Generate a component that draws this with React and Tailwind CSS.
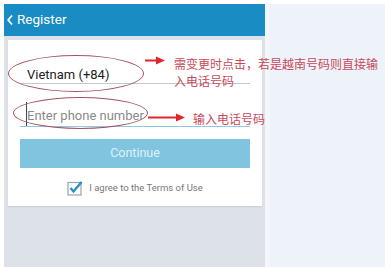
import React from 'react';

const Arrow = ({ width }) => (
    <svg width={width} height="9" viewBox={`0 0 ${width} 9`}>
        <line x1="0" y1="4.5" x2={width - 7} y2="4.5" stroke="#e0252b" strokeWidth="2" />
        <polygon points={`${width - 9},0.5 ${width},4.5 ${width - 9},8.5`} fill="#e0252b" />
    </svg>
);

export default function App() {
    return (
        <div className="relative w-[385px] h-[267px] overflow-hidden bg-white pt-[4px] pl-[4px] font-['Roboto','Noto_Sans_CJK_SC',sans-serif]">
            <div className="flex h-full">
                <div className="w-[261px] flex flex-col">
                    <div className="h-[32px] bg-[#1a8cc4] flex items-center pl-[2px] gap-[3px] text-white">
                        <svg width="8" height="12" viewBox="0 0 8 12">
                            <path d="M6 1.5 L2.2 6 L6 10.5" stroke="#fff" strokeWidth="1.8" fill="none" />
                        </svg>
                        <span className="text-[13.5px] leading-none">Register</span>
                    </div>
                    <div className="flex-1 bg-[#dde2e9] pt-[4px] pl-[4px] pr-[3px]">
                        <div className="bg-white h-[166px] shadow-[0_1px_1px_rgba(0,0,0,0.08)] px-[12px] flex flex-col">
                            <div className="h-[44px] border-b border-[#c4c7cc] flex items-end pb-[2px] pl-[7px]">
                                <span className="text-[13px] text-[#222] leading-none">Vietnam (+84)</span>
                            </div>
                            <div className="h-[43px] border-b border-[#8fc8e2] flex items-end pl-[6px]">
                                <span className="w-px h-[24px] bg-[#2b4a7a]" />
                                <span className="text-[13px] text-[#8a8a8a] leading-none mb-[4px]">Enter phone number</span>
                            </div>
                            <div className="mt-[12px] h-[29px] bg-[#80c4e0] flex items-center justify-center text-[12.5px] text-[#dff1f8]">
                                Continue
                            </div>
                            <div className="mt-[12px] flex items-center justify-center gap-[6px]">
                                <svg width="16" height="16" viewBox="0 0 16 16">
                                    <rect x="1" y="2.5" width="13" height="12.5" fill="#fff" stroke="#9aa3ab" strokeWidth="1.2" />
                                    <path d="M3.5 8 L6.5 11.5 L14.5 2" stroke="#2a8fc2" strokeWidth="2.4" fill="none" />
                                </svg>
                                <span className="text-[9.5px] text-[#777]">I agree to the Terms of Use</span>
                            </div>
                        </div>
                    </div>
                </div>
                <div className="w-[5px] bg-[#f4f6fb]" />
                <div className="flex-1 bg-[#eef2f9]" />
            </div>

            {/* annotations */}
            <div className="absolute left-[8px] top-[55px] w-[136px] h-[37px] rounded-[50%] border border-[#a4545c]" />
            <div className="absolute left-[13px] top-[97px] w-[135px] h-[32px] rounded-[50%] border border-[#a4545c]" />
            <div className="absolute left-[145px] top-[56px]"><Arrow width={20} /></div>
            <div className="absolute left-[148px] top-[113px]"><Arrow width={37} /></div>
            <div className="absolute left-[174px] top-[57px] text-[12px] leading-[17px] text-[#c84a5a] whitespace-nowrap">
                需变更时点击，若是越南号码则直接输<br />入电话号码
            </div>
            <div className="absolute left-[193px] top-[112px] text-[12px] leading-[17px] text-[#c84a5a] whitespace-nowrap">
                输入电话号码
            </div>
        </div>
    );
}
